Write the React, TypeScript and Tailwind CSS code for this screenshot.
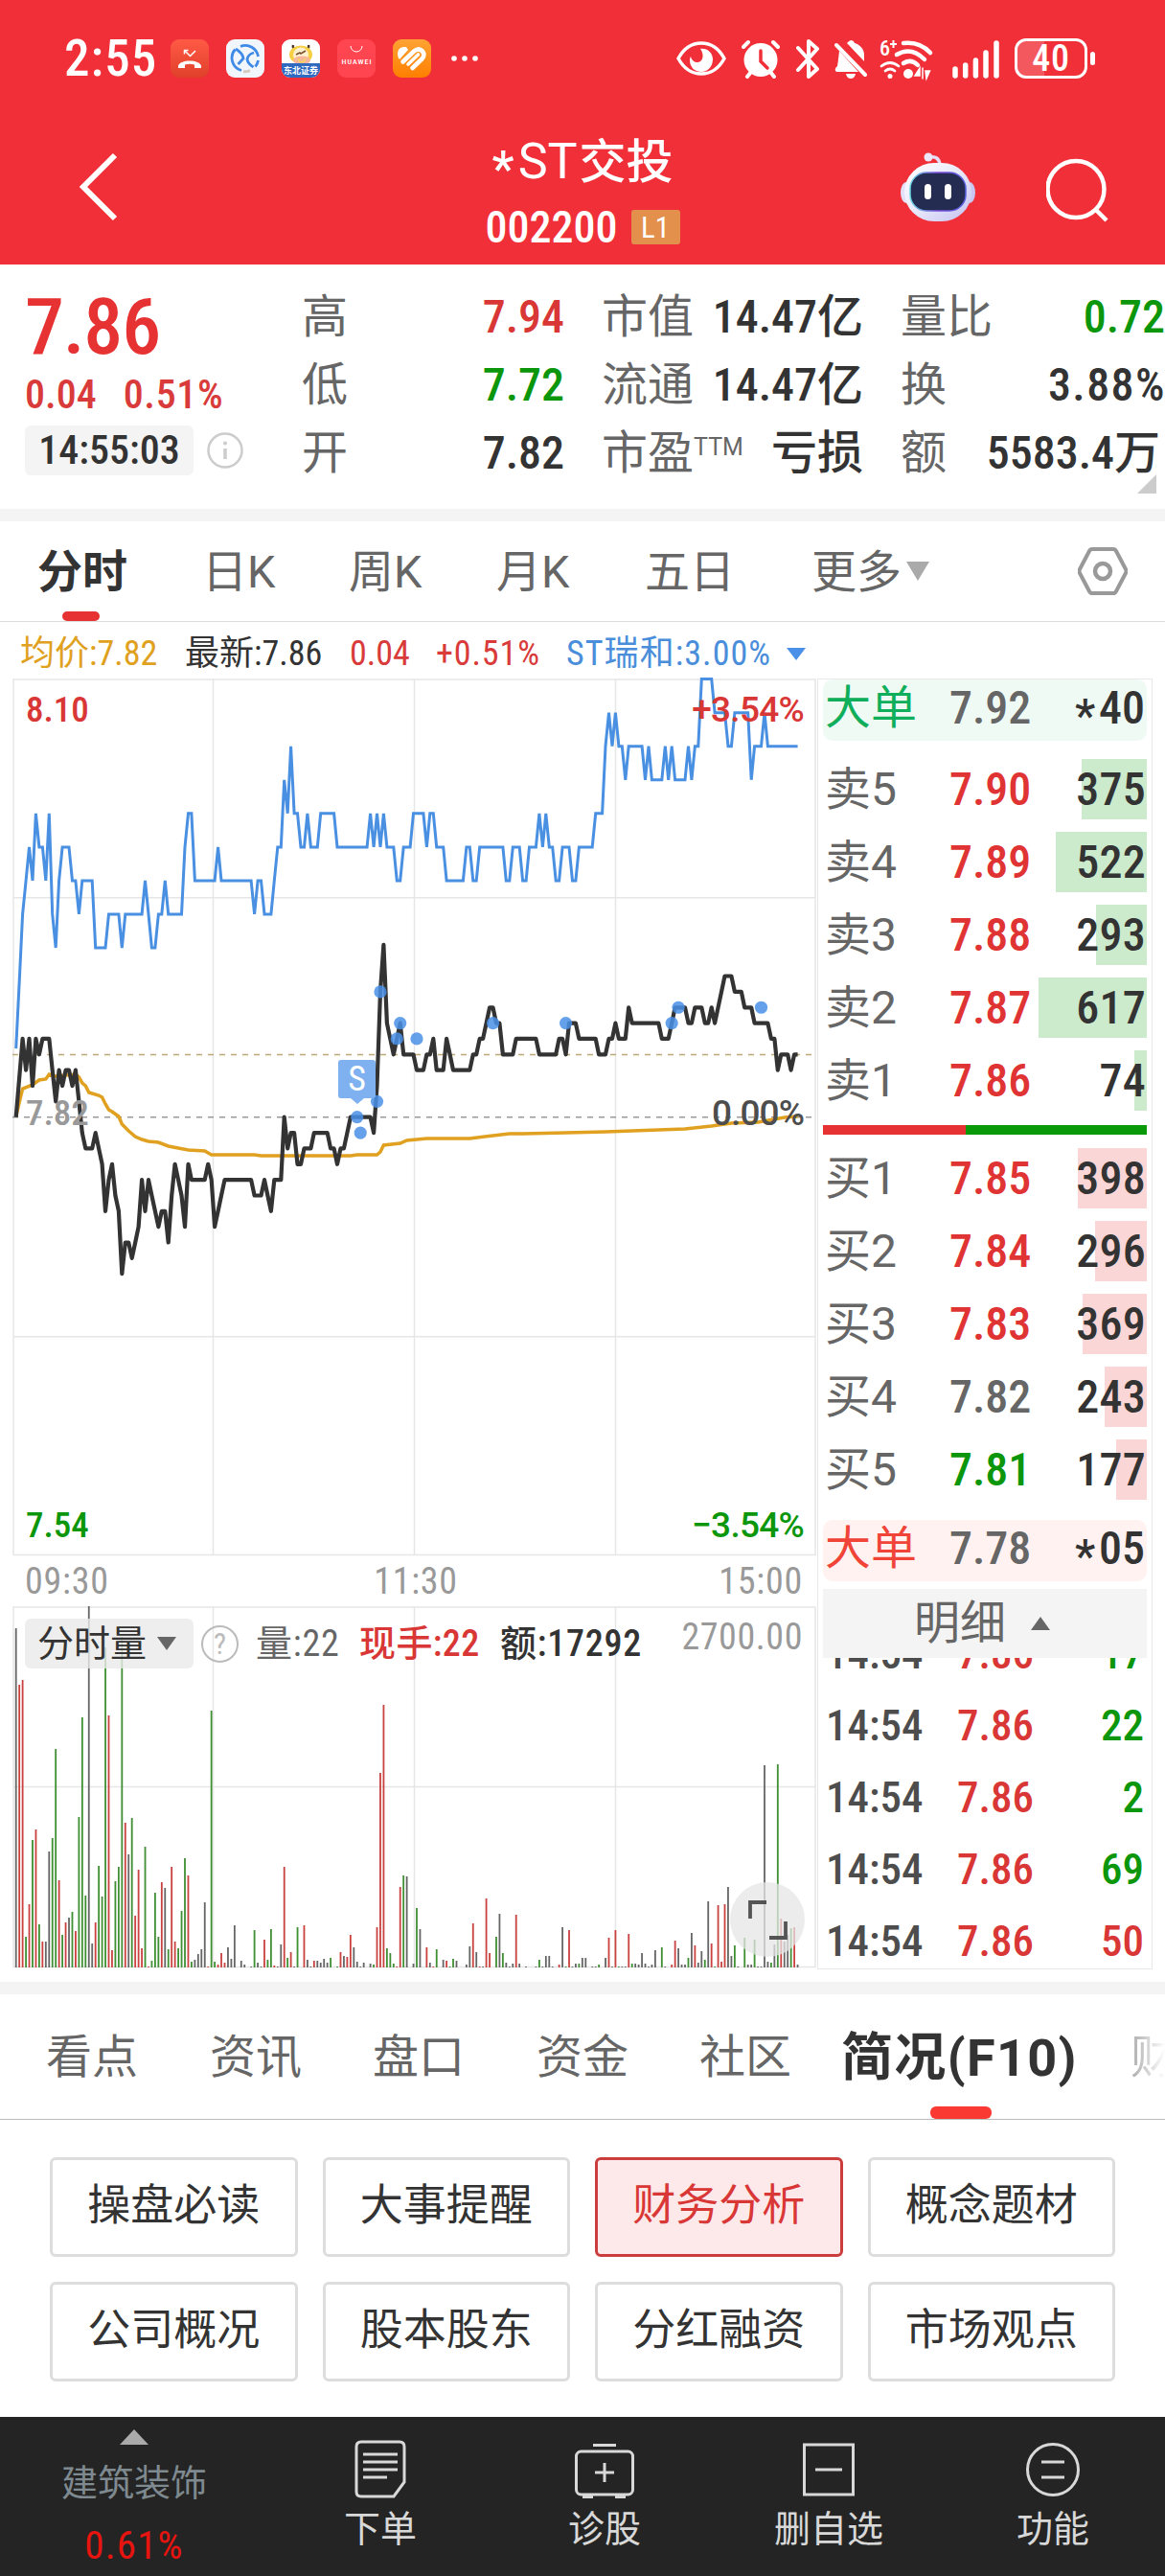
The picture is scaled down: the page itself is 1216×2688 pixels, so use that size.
import type { ReactNode } from 'react';
import clsx from 'clsx';

/* ---------- data ---------- */

// [minute of the session, ticks from yesterday's close]
const price: [number, number][] = [
  [0, 0], [2, 5], [3, 3], [4, 5], [5, 2], [6, 5], [7, 4], [8, 5], [10, 5], [11, 3], [12, 1], [13, 3], [14, 2], [15, 3],
  [16, 3], [17, 2], [18, 3], [19, 1], [20, -1], [21, -2], [23, -2], [24, -1], [25, -2], [26, -3], [27, -6], [28, -4],
  [29, -3], [30, -5], [31, -6], [32, -10], [33, -8], [34, -8], [35, -9], [36, -8], [37, -7], [38, -4], [39, -6], [40, -4],
  [41, -5], [42, -6], [43, -7], [44, -6], [45, -6], [46, -8], [47, -5], [48, -3], [49, -4], [50, -5], [51, -7], [52, -3],
  [53, -4], [57, -4], [58, -3], [59, -4], [60, -7], [61, -6], [62, -5], [63, -4], [71, -4], [72, -5], [74, -5], [75, -4],
  [76, -5], [77, -6], [78, -4], [80, -4], [81, 0], [82, -2], [83, -1], [84, -1], [85, -3], [86, -3], [87, -2], [89, -2],
  [90, -1], [94, -1], [95, -2], [96, -2], [97, -3], [98, -2], [99, -2], [100, -1], [101, 0], [107, 0], [108, -1],
  [109, 2], [110, 8], [111, 11], [112, 6], [113, 5], [114, 4], [115, 5], [116, 6], [117, 4], [120, 4], [121, 3], [123, 3],
  [124, 4], [125, 4], [126, 5], [127, 3], [129, 3], [130, 5], [131, 4], [132, 3], [137, 3], [138, 4], [139, 4], [140, 5],
  [141, 5], [142, 6], [143, 7], [144, 7], [145, 6], [146, 6], [147, 4], [150, 4], [151, 5], [157, 5], [158, 4], [163, 4],
  [164, 5], [165, 5], [166, 4], [167, 6], [169, 6], [170, 5], [175, 5], [176, 4], [178, 4], [179, 5], [180, 5], [181, 6],
  [182, 5], [184, 5], [185, 7], [186, 6], [194, 6], [195, 5], [197, 5], [198, 6], [199, 7], [202, 7], [203, 6], [204, 6],
  [205, 7], [207, 7], [208, 6], [209, 6], [210, 7], [211, 6], [214, 9], [216, 9], [217, 8], [219, 8], [220, 7], [222, 7],
  [223, 6], [227, 6], [228, 5], [229, 5], [230, 3], [231, 4], [233, 4], [234, 3], [235, 4], [236, 4],
];

const rival: [number, number][] = [
  [0, -3], [1, -1], [2, 1], [3, 2], [4, 3], [5, 2], [6, 4], [7, 3], [8, 3], [9, 2], [10, 4], [11, 1], [12, 0], [13, 2],
  [14, 3], [16, 3], [17, 2], [18, 2], [19, 1], [20, 2], [23, 2], [24, 0], [27, 0], [28, 1], [31, 1], [32, 0], [33, 1],
  [38, 1], [39, 2], [40, 1], [41, 0], [42, 0], [43, 1], [44, 1], [45, 2], [46, 1], [50, 1], [51, 3], [52, 4], [53, 4],
  [54, 2], [60, 2], [61, 3], [62, 2], [71, 2], [72, 1], [73, 2], [74, 2], [75, 1], [77, 1], [78, 2], [79, 3], [80, 3],
  [81, 5], [82, 4], [83, 6], [84, 4], [85, 4], [86, 3], [87, 3], [88, 4], [89, 3], [91, 3], [92, 4], [96, 4], [97, 3],
  [106, 3], [107, 4], [108, 3], [109, 4], [110, 3], [111, 4], [112, 3], [114, 3], [115, 2], [116, 2], [117, 3], [119, 3],
  [120, 4], [123, 4], [124, 3], [125, 4], [126, 4], [127, 3], [129, 3], [130, 2], [135, 2], [136, 3], [137, 3], [138, 2],
  [139, 2], [140, 3], [147, 3], [148, 2], [149, 2], [150, 3], [152, 3], [153, 2], [154, 2], [155, 3], [157, 3], [158, 4],
  [159, 3], [160, 4], [161, 3], [162, 3], [163, 2], [164, 2], [165, 3], [167, 3], [168, 2], [169, 2], [170, 3], [174, 3],
  [175, 4], [177, 4], [178, 6], [179, 7], [180, 6], [181, 7], [182, 6], [183, 6], [184, 5], [185, 6], [189, 6], [190, 5],
  [191, 6], [192, 5], [195, 5], [196, 6], [197, 5], [198, 6], [199, 5], [202, 5], [203, 6], [204, 5], [205, 6], [206, 6],
  [207, 8], [210, 8], [211, 7], [214, 7], [215, 6], [216, 6], [217, 7], [221, 7], [222, 5], [223, 6], [225, 6], [226, 7],
  [227, 6], [236, 6],
];

// [minute, y] on the chart canvas
const average: [number, number][] = [
  [0, 457], [1, 442], [2, 428], [5, 424], [7, 419], [9, 418], [10, 413], [12, 415], [18, 413], [19, 416], [20, 422],
  [21, 425], [22, 432], [25, 435], [26, 437], [27, 444], [28, 450], [29, 452], [31, 457], [32, 465], [34, 472], [36, 478],
  [38, 481], [40, 483], [43, 484], [46, 488], [52, 492], [57, 493], [59, 497], [72, 497], [74, 498], [101, 498],
  [103, 497], [109, 497], [110, 494], [111, 487], [116, 485], [118, 482], [124, 480], [137, 480], [144, 477], [149, 475],
  [153, 475], [166, 474], [178, 473], [186, 472], [194, 471], [202, 470], [210, 467], [216, 464], [224, 463], [232, 458],
  [236, 457],
];

const orders: [number, number][] = [
  [103, 0], [104, -1], [109, 1], [110, 8], [115, 5], [116, 6], [121, 5], [144, 6], [166, 6], [198, 6], [200, 7], [225, 7],
];

// one entry per minute: k = flat, r = up, g = down, then the bar height
const volume =
  'k354 r295 r300 g32 r66 g133 r144 g45 r27 k27 k121 g135 g228 r91 g34 r47 k52 g58 r38 g157 g261 g75 k377 k25 r47 g106 g74 ' +
  'g334 r263 r18 g90 g105 g345 r151 k118 g156 r54 r102 r20 g126 r1 g7 g78 g32 r89 k83 g19 r105 r27 g20 g59 g114 r96 g6 k8 ' +
  'k14 k19 k68 r1 g268 g6 r3 r15 r5 k21 k9 k44 k0 k7 k3 k0 k1 g39 k5 k1 r29 g8 g40 r2 k1 k24 r105 g10 r16 k1 g42 k0 r44 k8 k1 ' +
  'r7 k7 k5 k9 k5 g10 k0 g1 r16 k12 r11 r34 k21 k6 k1 k5 k0 k4 g3 r42 r203 r274 g20 g15 g4 r1 r84 g96 k95 k0 k4 g62 k40 k0 ' +
  'r21 k5 r1 g19 k0 k8 r7 g1 g9 k7 k0 k0 k3 k22 r46 k16 r1 k1 r72 r15 k0 g32 k56 g15 k5 k1 k4 r55 k4 k0 k1 k0 k0 k1 g8 k1 k12 ' +
  'k12 k1 k0 r3 k42 g1 r39 k1 k4 g4 k10 k10 k0 k1 k1 g3 k0 k10 r31 k1 r39 g1 k1 k1 r35 g4 k4 k3 k15 k4 k1 k3 k18 k0 g21 k1 k0 ' +
  'r3 r28 k20 k3 k3 g10 k36 r23 k5 k17 g8 k69 r25 g1 r65 r6 r66 k84 k12 g23 k1 k0 g31 k3 k3 g29 k1 k1 k211 k6 g5 k24 g212 r51 ' +
  'k27 k34 g41 r42 k3';

const barColors: Record<string, string> = { k: '#666666', r: '#c9423f', g: '#3f8f33' };

const sells = [
  { label: '卖5', price: '7.90', qty: '375', bar: 68 },
  { label: '卖4', price: '7.89', qty: '522', bar: 95 },
  { label: '卖3', price: '7.88', qty: '293', bar: 53 },
  { label: '卖2', price: '7.87', qty: '617', bar: 113 },
  { label: '卖1', price: '7.86', qty: '74', bar: 13 },
];

const buys = [
  { label: '买1', price: '7.85', qty: '398', bar: 72, color: 'text-[#e03434]' },
  { label: '买2', price: '7.84', qty: '296', bar: 54, color: 'text-[#e03434]' },
  { label: '买3', price: '7.83', qty: '369', bar: 67, color: 'text-[#e03434]' },
  { label: '买4', price: '7.82', qty: '243', bar: 44, color: 'text-[#666]' },
  { label: '买5', price: '7.81', qty: '177', bar: 32, color: 'text-[#0b960b]' },
];

const ticks = [
  { qty: '17', color: 'text-[#0b960b]' },
  { qty: '22', color: 'text-[#0b960b]' },
  { qty: '2', color: 'text-[#0b960b]' },
  { qty: '69', color: 'text-[#0b960b]' },
  { qty: '50', color: 'text-[#d93636]' },
];

const topics = ['操盘必读', '大事提醒', '财务分析', '概念题材', '公司概况', '股本股东', '分红融资', '市场观点'];

/* ---------- status bar ---------- */

function AppIcons() {
  return (
    <div className="flex items-center gap-[18px]">
      <svg width="40" height="40" viewBox="0 0 40 40">
        <defs>
          <linearGradient id="call" x1="0" y1="0" x2="0" y2="1">
            <stop offset="0" stopColor="#ff5a45" />
            <stop offset="1" stopColor="#e0402a" />
          </linearGradient>
        </defs>
        <rect width="40" height="40" rx="9" fill="url(#call)" />
        <path d="M14.500 15.500v-4h4M15 12l5.500 5.500 5.500-5.500" fill="none" stroke="#fff" strokeWidth="1.500" />
        <path d="M8 30v-2.500c1-3 6-5 12-5s11 2 12 5V30h-7v-3.500c-3-1-7-1-10 0V30z" fill="#fff" />
      </svg>
      <svg width="40" height="40" viewBox="0 0 40 40">
        <rect width="40" height="40" rx="9" fill="#f1f6fd" />
        <g fill="none" stroke="#3f8ae6" strokeWidth="2.800">
          <path d="M15 7.500a13.500 13.500 0 0 1 18.500 10.500M33.500 22a13.500 13.500 0 0 1-3 6.500M9.500 10.500a13.500 13.500 0 0 0 6.500 22" />
          <path d="M10 10c5 3 7.500 6 8 10L12.500 26M29 14c-4 1-6.500 3.500-7 7 .5 3 2.500 5.500 6.500 8" />
        </g>
        <path d="M18 33.500q3 .5 7-.8" fill="none" stroke="#d8c9c0" strokeWidth="3" />
      </svg>
      <svg width="40" height="40" viewBox="0 0 40 40">
        <rect width="40" height="40" rx="9" fill="#fff" />
        <path d="M12 6q-1 4 3 4M28 6q1 4-3 4" stroke="#4a3626" strokeWidth="2.500" fill="none" />
        <ellipse cx="20" cy="16" rx="12" ry="9.500" fill="#f6cf45" />
        <ellipse cx="20" cy="16" rx="8" ry="7.500" fill="#fdf0cf" />
        <path d="M15 16l4-2 1 1 5-3" stroke="#7a5230" strokeWidth="1.500" fill="none" />
        <ellipse cx="21" cy="22" rx="9" ry="4.500" fill="#f7b79b" />
        <path d="M18 20v2q3 4 6 0v-2" stroke="#f0e040" strokeWidth="1.200" fill="none" />
        <path d="M0 25h40v6a9 9 0 0 1-9 9H9a9 9 0 0 1-9-9z" fill="#2f69c0" />
        <text x="20" y="36" fontSize="9" textAnchor="middle" fill="#fff" fontWeight="700">东北证券</text>
      </svg>
      <svg width="40" height="40" viewBox="0 0 40 40">
        <rect width="40" height="40" rx="9" fill="#ff4550" />
        <path d="M14 7a6 6 0 0 0 12 0" fill="none" stroke="#fff" strokeWidth="1" />
        <text x="20" y="25.500" fontSize="8" textAnchor="middle" textLength="31" fill="#fff" fontWeight="500">HUAWEI</text>
      </svg>
      <svg width="40" height="40" viewBox="0 0 40 40">
        <defs>
          <linearGradient id="fin" x1="0" y1="0" x2="0" y2="1">
            <stop offset="0" stopColor="#ffa334" />
            <stop offset="1" stopColor="#ff7f00" />
          </linearGradient>
        </defs>
        <rect width="40" height="40" rx="9" fill="url(#fin)" />
        <path d="M5 15q0-6 6-7h3l2 3-9 10q-2-2-2-6z" fill="#fff" />
        <g fill="none" stroke="#fff" strokeLinecap="round" strokeWidth="4.600">
          <path d="M10.500 23.500L22 12.500Q27 8.500 31 12.500q3 4-.5 8L20.500 30" />
          <path d="M16 26L26.500 16" strokeWidth="3.600" />
        </g>
      </svg>
      <svg width="40" height="40" viewBox="0 0 40 40" fill="#fff">
        <circle cx="6" cy="20" r="2.800" />
        <circle cx="17" cy="20" r="2.800" />
        <circle cx="28" cy="20" r="2.800" />
      </svg>
    </div>
  );
}

function StatusIcons() {
  return (
    <div className="flex items-center">
      {/* eye comfort */}
      <svg width="52" height="40" viewBox="0 0 52 40" className="mr-4">
        <path d="M2 20C8 9 17 4 26 4s18 5 24 16C44 31 35 36 26 36S8 31 2 20z" fill="none" stroke="#fff" strokeWidth="3.500" />
        <path d="M25 10c7-1 13 4 13 11 0 7-5 13-12 13s-12-5-12-12c0-2 .5-3 1-4 1 4 4 6 7 6 5 0 8-7 3-14z" fill="#fff" />
      </svg>
      {/* alarm */}
      <svg width="40" height="41" viewBox="0 0 40 41" className="mr-[17px]">
        <circle cx="20" cy="21.500" r="17.500" fill="#fff" />
        <path d="M2 8l5-5M38 8l-5-5M6 39l4-5M34 39l-4-5" stroke="#fff" strokeWidth="4" strokeLinecap="round" />
        <path d="M20 12v11l7 7" fill="none" stroke="#f12f38" strokeWidth="3.500" strokeLinecap="round" />
      </svg>
      {/* bluetooth */}
      <svg width="24" height="41" viewBox="0 0 24 41" className="mr-4">
        <path d="M2 9l20 22-9 8V2l9 8L2 32" fill="none" stroke="#fff" strokeWidth="4" strokeLinejoin="round" strokeLinecap="round" />
      </svg>
      {/* muted bell */}
      <svg width="34" height="41" viewBox="0 0 34 41" className="mr-[13px]">
        <path d="M17 1c-2 1-3 2-4 3l18 19V16c0-6-5-11-10-12q-1-3-4-3zM5 12L25 34H2q-3-3 1-6 1-6 2-16z" fill="#fff" />
        <path d="M2 6l30 31" stroke="#fff" strokeWidth="4" strokeLinecap="round" />
        <path d="M12 36h10q-1 5-5 5t-5-5z" fill="#fff" />
      </svg>
      {/* wifi 6+ */}
      <svg width="55" height="41" viewBox="0 0 55 41" className="mr-[21px] overflow-visible" fill="none" stroke="#fff" strokeLinecap="round">
        <text x="0" y="17" fontSize="22" fontWeight="500" fill="#fff" stroke="none">6</text>
        <path d="M14.500 1v8M11 5h7" strokeWidth="2" strokeLinecap="butt" />
        <path d="M25 4q17-2 28 10" strokeWidth="4.500" />
        <path d="M18 16q15-9 29 5" strokeWidth="4.500" />
        <path d="M25 25q8-5 15 2" strokeWidth="4.500" />
        <circle cx="30" cy="36" r="5" fill="#fff" stroke="none" />
        <path d="M2 28q9-7 18 0M6 33q5-4 10 0" strokeWidth="2.800" />
        <circle cx="11" cy="38.500" r="2.500" fill="#fff" stroke="none" />
        <path d="M37 38l5-8v8zM45 30v11M48 33h4.500L49 41z" fill="#fff" strokeWidth="1.500" />
      </svg>
      {/* signal */}
      <svg width="49" height="41" viewBox="0 0 49 41" className="mr-4" stroke="#fff" strokeWidth="5.500" strokeLinecap="round">
        <path d="M3 38V31M13.700 38V27M24.400 38V22M35 38V14M46 38V4" />
      </svg>
      {/* battery */}
      <div className="relative flex h-[42px] w-[76px] items-center justify-center rounded-[12px] border-[3px] border-white">
        <div className="absolute inset-y-0 left-0 w-[28px] rounded-l-[9px] bg-white/20" />
        <span className="relative text-[38px] font-medium leading-none tracking-[0.02em] text-white">40</span>
      </div>
      <div className="ml-[3px] h-[14px] w-[5px] rounded-full bg-white" />
    </div>
  );
}

function Robot() {
  return (
    <svg width="78" height="72" viewBox="0 0 78 72">
      <defs>
        <linearGradient id="shell" x1="0" y1="0" x2="1" y2="1">
          <stop offset="0" stopColor="#ffffff" />
          <stop offset="0.500" stopColor="#e9e8fa" />
          <stop offset="1" stopColor="#c3c0f0" />
        </linearGradient>
        <linearGradient id="rim" x1="0" y1="0" x2="1" y2="0">
          <stop offset="0" stopColor="#69d6e0" />
          <stop offset="0.500" stopColor="#7d4fe0" />
          <stop offset="1" stopColor="#5560dd" />
        </linearGradient>
      </defs>
      <path d="M30 5q10-2 11 8" fill="none" stroke="#e4ddf5" strokeWidth="3.500" />
      <circle cx="29" cy="5" r="4.500" fill="#ece6f8" />
      <ellipse cx="6" cy="42" rx="6" ry="11" fill="#e3e0f7" />
      <ellipse cx="72" cy="42" rx="6" ry="11" fill="#c9c6f2" />
      <rect x="4" y="11" width="70" height="61" rx="31" fill="url(#shell)" />
      <rect x="10" y="21" width="58" height="40" rx="17" fill="#242c52" stroke="url(#rim)" strokeWidth="1.500" />
      <rect x="25" y="33" width="7" height="16" rx="3.500" fill="#fff" />
      <rect x="46" y="33" width="7" height="16" rx="3.500" fill="#fff" />
    </svg>
  );
}

function Header() {
  return (
    <header className="bg-[#f12f38] text-white">
      <div className="flex h-[122px] items-center justify-between pl-[67px] pr-[73px]">
        <div className="flex items-center gap-[17px]">
          <span className="w-[94px] whitespace-nowrap text-[53px] font-medium leading-none tracking-[0.02em]">2:55</span>
          <AppIcons />
        </div>
        <StatusIcons />
      </div>
      <div className="grid h-[154px] grid-cols-[1fr_auto_1fr]">
        <svg width="42" height="72" viewBox="0 0 42 72" className="ml-[82px] mt-[37px]">
          <path d="M38 3L5 36l33 33" fill="none" stroke="#fff" strokeWidth="6" />
        </svg>
        <div className="flex flex-col items-center pt-[19px]">
          <h1 className="flex h-[56px] items-center text-[52px] font-medium leading-none">
            <Star />
            <span className="mr-[2px] font-normal font-stretch-[100%]">ST</span>
            <span className="text-[49px]">交投</span>
          </h1>
          <div className="mt-[12px] flex h-[56px] items-center gap-[14px]">
            <span className="text-[46px] font-medium leading-none">002200</span>
            <span className="flex h-[36px] w-[51px] items-center justify-center rounded-[3px] bg-[#e2904c] text-[31px] leading-none">L1</span>
          </div>
        </div>
        <div className="flex justify-end gap-[74px] pr-[58px] pt-[37px]">
          <Robot />
          <svg width="66" height="72" viewBox="0 0 66 72" className="mt-1" fill="none" stroke="#fff" strokeWidth="4.500">
            <circle cx="31" cy="34.500" r="29.500" />
            <path d="M52 56l11 11" />
          </svg>
        </div>
      </div>
    </header>
  );
}

// asterisk dropped to the middle of the digits
function Star() {
  return <span className="relative top-[0.160em] mr-[0.080em] inline-block">*</span>;
}

/* ---------- quote ---------- */

function Cell({ label, children, color = 'text-[#333]' }: { label: ReactNode; children: ReactNode; color?: string }) {
  return (
    <div className="flex h-[71px] items-center justify-between whitespace-nowrap">
      <span className="text-[#666]">{label}</span>
      <span className={clsx('font-medium', color)}>{children}</span>
    </div>
  );
}

function Quote() {
  return (
    <section className="relative flex h-[255px] text-[48px] leading-none">
      <div className="w-[315px] pl-[26px] pt-[25px]">
        <p className="text-[82px] font-medium leading-[80px] tracking-[-0.015em] text-[#e63232]">7.86</p>
        <p className="flex h-[62px] items-center gap-[28px] text-[42px] font-medium text-[#d93a3a]">
          <span>0.04</span>
          <span className="tracking-[0.015em]">0.51%</span>
        </p>
        <div className="flex items-center gap-[14px] pt-px">
          <span className="flex h-[52px] w-[176px] items-center justify-center rounded-[6px] bg-[#f4f4f4] pb-px text-[42px] font-medium text-[#333]">
            14:55:03
          </span>
          <svg width="38" height="38" viewBox="0 0 38 38" fill="none" stroke="#ccc">
            <circle cx="19" cy="19" r="17.500" strokeWidth="2.500" />
            <path d="M19 17v11" strokeWidth="3.500" />
            <circle cx="19" cy="11.500" r="1" strokeWidth="2" />
          </svg>
        </div>
      </div>
      <div className="mr-[39px] w-[274px] pt-[19px]">
        <Cell label="高" color="text-[#d93636]">7.94</Cell>
        <Cell label="低" color="text-[#0b960b]">7.72</Cell>
        <Cell label="开">7.82</Cell>
      </div>
      <div className="mr-[39px] w-[273px] pt-[19px]">
        <Cell label="市值">14.47亿</Cell>
        <Cell label="流通">14.47亿</Cell>
        <Cell label={<>市盈<sup className="relative -top-[14px] align-baseline text-[25px] font-stretch-[100%]">TTM</sup></>}>亏损</Cell>
      </div>
      <div className="flex-1 pt-[19px]">
        <Cell label="量比" color="text-[#0b960b]">0.72</Cell>
        <Cell label="换"><span className="-mr-px tracking-[0.030em]">3.88%</span></Cell>
        <Cell label="额"><span className="mr-[5px]">5583.4万</span></Cell>
      </div>
      <svg width="20" height="20" viewBox="0 0 20 20" className="absolute bottom-4 right-[9px]">
        <path d="M20 0v20H0z" fill="#ccc" />
      </svg>
    </section>
  );
}

function PeriodTabs() {
  return (
    <nav className="flex h-[105px] items-center border-b border-[#ddd] pl-[39px] pr-[39px] text-[47px] leading-none text-[#666] font-stretch-[100%]">
      <div className="relative flex h-full w-[172px] items-center font-bold text-[#333]">
        分时
        <span className="absolute bottom-0 left-[26px] h-[10px] w-[39px] rounded-full bg-[#e63232]" />
      </div>
      <span className="w-[153px]">日K</span>
      <span className="w-[154px]">周K</span>
      <span className="w-[155px]">月K</span>
      <span className="w-[174px]">五日</span>
      <span>更多</span>
      <svg width="24" height="20" viewBox="0 0 24 20" className="ml-[5px]">
        <path d="M0 0h24L12 20z" fill="#aaa" />
      </svg>
      <svg width="52" height="50" viewBox="0 0 52 50" className="ml-auto" fill="none" stroke="#999" strokeLinejoin="round">
        <path d="M15 2h22q2 0 3 2l10 19q1 2 0 4L40 46q-1 2-3 2H15q-2 0-3-2L2 27q-1-2 0-4L12 4q1-2 3-2z" strokeWidth="4" />
        <circle cx="26" cy="25" r="8" strokeWidth="4.500" />
      </svg>
    </nav>
  );
}

/* ---------- charts ---------- */

const minuteX = (m: number) => 3.7 + m * 3.457;
const toPoints = (list: [number, number][], y: (v: number) => number) =>
  list.map(([m, v]) => `${minuteX(m).toFixed(1)},${y(v).toFixed(1)}`).join(' ');
const priceY = (v: number) => 457.7 - v * 16.35;
const rivalY = (v: number) => 281 - v * 35.05;

function Legend() {
  return (
    <div className="flex h-[59px] items-center whitespace-nowrap pl-[21px] pt-[7px] text-[36px] leading-none">
      <span className="w-[172px] text-[#e0a020]">均价:7.82</span>
      <span className="w-[172px] text-[#333]">最新:7.86</span>
      <span className="w-[90px] text-[#d93a3a]">0.04</span>
      <span className="w-[136px] tracking-[0.025em] text-[#d93a3a]">+0.51%</span>
      <span className="w-[230px] tracking-[0.030em] text-[#4a8edb]">ST瑞和:3.00%</span>
      <svg width="20" height="13" viewBox="0 0 20 13">
        <path d="M0 0h20L10 13z" fill="#4a90e8" />
      </svg>
    </div>
  );
}

function PriceChart() {
  return (
    <div className="relative ml-[13px] h-[915px] w-[840px] text-[37px] font-medium leading-none">
      <svg width="840" height="915" viewBox="0 0 840 915" className="block overflow-visible" fill="none">
        <g stroke="#e6e6e6" strokeWidth="1.500">
          <path d="M1 1H838V914.500H1zM1 228.700H838M1 686.700H838M209.500 1V914M419.500 1V914M629.500 1V914" />
        </g>
        <path d="M0 392.500H838" stroke="#bfa878" strokeWidth="1.500" strokeDasharray="6 6" />
        <path d="M0 457.700H838" stroke="#999" strokeWidth="1.500" strokeDasharray="6 6" />
        <polyline points={toPoints(rival, rivalY)} stroke="#4a90e2" strokeWidth="3" />
        <polyline points={toPoints(average, (v) => v)} stroke="#e0a020" strokeWidth="3.500" />
        <polyline points={toPoints(price, priceY)} stroke="#333" strokeWidth="4.200" strokeLinejoin="round" />
        {orders.map(([m, v]) => (
          <circle key={m} cx={minuteX(m)} cy={priceY(v)} r="6.600" fill="#4a8fe8" fillOpacity="0.850" />
        ))}
        <path d="M343 398h33a3 3 0 0 1 3 3v34a3 3 0 0 1-3 3h-9l-7 6-7-6h-10a3 3 0 0 1-3-3v-34a3 3 0 0 1 3-3z" fill="#7fb1f1" />
        <text x="359.500" y="430" fontSize="36" fontWeight="400" textAnchor="middle" fill="#fff">S</text>
      </svg>
      <span className="absolute left-[14px] top-[14px] text-[#d93636]">8.10</span>
      <span className="absolute right-[14px] top-[14px] tracking-[-0.020em] text-[#d93636] font-stretch-[100%]">+3.54%</span>
      <span className="absolute left-[14px] top-[435px] text-[#999]">7.82</span>
      <span className="absolute right-[14px] top-[435px] tracking-[-0.025em] text-[#4d4d4d] font-stretch-[100%]">0.00%</span>
      <span className="absolute bottom-[13px] left-[14px] text-[#0b960b]">7.54</span>
      <span className="absolute bottom-[13px] right-[14px] tracking-[-0.020em] text-[#0b960b] font-stretch-[100%]">−3.54%</span>
    </div>
  );
}

function VolumeChart() {
  return (
    <div className="relative ml-[13px] h-[378px] w-[840px] text-[38px] leading-none">
      <svg width="840" height="378" viewBox="0 0 840 378" className="block">
        <path
          d="M1 1H838V376.500H1zM1 188.500H838M209.500 1V376M419.500 1V376M629.500 1V376"
          fill="none"
          stroke="#e6e6e6"
          strokeWidth="1.500"
        />
        {volume.split(' ').map((bar, m) => {
          const h = Number(bar.slice(1));
          return <rect key={m} x={minuteX(m) - 0.9} y={377 - h} width="1.800" height={h} fill={barColors[bar[0]]} />;
        })}
      </svg>
      <div className="absolute left-[13px] top-[13px] flex h-[52px] items-center whitespace-nowrap">
        <div className="flex h-full w-[176px] items-center gap-[11px] rounded-[6px] bg-[#eaeaea]/80 pl-[13px] text-[#333]">
          <span>分时量</span>
          <svg width="20" height="14" viewBox="0 0 20 14">
            <path d="M0 0h20L10 14z" fill="#666" />
          </svg>
        </div>
        <span className="ml-[8px] flex size-[39px] items-center justify-center rounded-full border-2 border-[#bbb] text-[31px] text-[#bbb]">?</span>
        <span className="ml-[18px] w-[108px] tracking-[0.020em] text-[#666]">量:22</span>
        <span className="w-[147px] font-medium tracking-[0.010em] text-[#d93636]">现手:22</span>
        <span className="font-medium tracking-[0.020em] text-[#333]">额:17292</span>
      </div>
      <span className="absolute right-[15px] top-[13px] tracking-[0.015em] text-[#999]">2700.00</span>
      <svg width="78" height="78" viewBox="0 0 78 78" className="absolute bottom-[12px] right-[13px]">
        <circle cx="39" cy="39" r="39" fill="#e6e6e6" fillOpacity="0.750" />
        <path d="M21 38V21h17M58 41v17H41" fill="none" stroke="#555" strokeWidth="3.800" />
      </svg>
    </div>
  );
}

/* ---------- order book ---------- */

type Level = { label: string; price: string; qty: string; bar: number; color?: string };

function BookRow({ level, side }: { level: Level; side: 'sell' | 'buy' }) {
  return (
    <div className="relative flex h-[63px] items-center">
      <div
        className={clsx('absolute inset-y-0 right-0', side === 'sell' ? 'bg-[#cceacc]' : 'bg-[#fad6d6]')}
        style={{ width: level.bar }}
      />
      <span className="relative w-[132px] pl-[2px] text-[#666] font-stretch-[100%]">{level.label}</span>
      <span className={clsx('relative font-medium', level.color ?? 'text-[#e03434]')}>{level.price}</span>
      <span className="relative ml-auto pr-px font-medium tracking-[0.005em] text-[#333]">{level.qty}</span>
    </div>
  );
}

function BigOrder({ price, qty, side }: { price: string; qty: string; side: 'sell' | 'buy' }) {
  return (
    <div
      className={clsx(
        'flex h-[64px] shrink-0 items-center rounded-[10px] pb-[4px]',
        side === 'sell' ? 'bg-[#f0faf5] text-[#0fae5a]' : 'bg-[#fff2f0] text-[#f04438]',
      )}
    >
      <span className="w-[132px] pl-[2px]">大单</span>
      <span className="font-medium text-[#666]">{price}</span>
      <span className="ml-auto pr-[2px] font-medium text-[#333]">
        <Star />
        {qty}
      </span>
    </div>
  );
}

function OrderBook() {
  return (
    <aside className="mt-[59px] flex h-[1347px] w-[350px] flex-col overflow-hidden border border-[#e8e8e8] px-[5px] text-[48px] leading-none">
      <BigOrder side="sell" price="7.92" qty="40" />
      <div className="mt-[19px] flex shrink-0 flex-col gap-[13px]">
        {sells.map((level) => (
          <BookRow key={level.label} level={level} side="sell" />
        ))}
      </div>
      <div className="mt-[15px] flex h-[10px] shrink-0">
        <div className="w-[149px] bg-[#e63232]" />
        <div className="flex-1 bg-[#099909]" />
      </div>
      <div className="mt-[14px] mb-[21px] flex shrink-0 flex-col gap-[13px]">
        {buys.map((level) => (
          <BookRow key={level.label} level={level} side="buy" />
        ))}
      </div>
      <BigOrder side="buy" price="7.78" qty="05" />
      <div className="z-10 mt-[8px] flex h-[72px] shrink-0 items-center justify-center gap-[26px] bg-[#f4f4f4] pr-[6px] text-[#666]">
        <span>明细</span>
        <svg width="20" height="14" viewBox="0 0 20 14">
          <path d="M0 14h20L10 0z" fill="#666" />
        </svg>
      </div>
      <div className="-mt-[42px] shrink-0 text-[45px] font-medium">
        {ticks.map((tick) => (
          <div key={tick.qty} className="flex h-[75px] items-center">
            <span className="w-[140px] pl-[3px] text-[#4d4d4d]">14:54</span>
            <span className="text-[#d93636]">7.86</span>
            <span className={clsx('ml-auto pr-[3px]', tick.color)}>{tick.qty}</span>
          </div>
        ))}
      </div>
    </aside>
  );
}

/* ---------- F10 ---------- */

function SectionTabs() {
  return (
    <nav className="flex h-[131px] items-center overflow-hidden whitespace-nowrap border-b border-[#bbb] pl-[48px] text-[48px] leading-none text-[#666]">
      <span className="w-[171px] shrink-0 pt-[2px]">看点</span>
      <span className="w-[170px] shrink-0 pt-[2px]">资讯</span>
      <span className="w-[171px] shrink-0 pt-[2px]">盘口</span>
      <span className="w-[170px] shrink-0 pt-[2px]">资金</span>
      <span className="w-[148px] shrink-0 pt-[2px]">社区</span>
      <div className="relative flex h-full w-[302px] shrink-0 items-center text-[54px] font-bold tracking-[0.025em] text-[#333] font-stretch-[100%]">
        <span className="pt-[3px]">简况(F10)</span>
        <span className="absolute bottom-0 left-[93px] h-[13px] w-[64px] rounded-[6px] bg-[#fa3a32]" />
      </div>
      <span className="shrink-0 bg-linear-to-r from-[#aaa] to-white to-[36px] bg-clip-text pt-[2px] text-transparent">财</span>
    </nav>
  );
}

function Topics() {
  return (
    <section className="grid h-[310px] grid-cols-4 content-start gap-[26px] px-[52px] pt-[39px] text-[45px] leading-none">
      {topics.map((topic) => (
        <button
          key={topic}
          className={clsx(
            'flex h-[104px] items-center justify-center rounded-[6px] border-3 pb-[3px]',
            topic === '财务分析' ? 'border-[#cb3d3d] bg-[#fde9e9] text-[#d93636]' : 'border-[#ddd] text-[#333]',
          )}
        >
          {topic}
        </button>
      ))}
    </section>
  );
}

function NavItem({ label, children }: { label: string; children: ReactNode }) {
  return (
    <div className="flex w-[234px] flex-col items-center pt-[23px] text-[#d8d8d8]">
      <svg width="64" height="64" viewBox="0 0 64 64" fill="none" stroke="#d8d8d8" strokeWidth="3">
        {children}
      </svg>
      <span className="mt-[11px] text-[38px] leading-none">{label}</span>
    </div>
  );
}

function BottomNav() {
  return (
    <footer className="flex h-[166px] bg-[#242424]">
      <div className="flex w-[280px] flex-col items-center pt-[13px] leading-none">
        <svg width="30" height="16" viewBox="0 0 30 16">
          <path d="M0 16h30L15 0z" fill="#aaa" />
        </svg>
        <span className="mt-[21px] text-[38px] text-[#7f8a90]">建筑装饰</span>
        <span className="mt-[26px] text-[41px] tracking-[0.030em] text-[#e8140f]">0.61%</span>
      </div>
      <NavItem label="下单">
        <path d="M12 3h40q5 0 5 5v37L46 60H12q-5 0-5-5V8q0-5 5-5zM14 16h36M14 24h36M14 32h36M14 40h25" />
      </NavItem>
      <NavItem label="诊股">
        <rect x="2.500" y="13" width="59" height="45" rx="5" />
        <path d="M20 6.500h24M32 25v20M22 35h20M9 60.500h11M43 60.500h11" />
      </NavItem>
      <NavItem label="删自选">
        <path d="M6.500 6h51v52h-51zM18 32h28" />
      </NavItem>
      <NavItem label="功能">
        <circle cx="32" cy="32" r="26.500" />
        <path d="M20 24h24M20 40h24" />
      </NavItem>
    </footer>
  );
}

export default function App() {
  return (
    <div className="w-[1216px] overflow-hidden bg-white font-[Roboto,'Noto_Sans_CJK_SC',sans-serif] font-stretch-[84%]">
      <Header />
      <Quote />
      <div className="h-[13px] bg-[#f4f4f4]" />
      <PeriodTabs />
      <main className="flex h-[1419px]">
        <div className="w-[853px]">
          <Legend />
          <PriceChart />
          <div className="grid h-[53px] grid-cols-3 items-center pl-[26px] pr-[15px] text-[38px] leading-none tracking-[0.020em] text-[#999]">
            <span>09:30</span>
            <span className="pl-1 text-center">11:30</span>
            <span className="text-right">15:00</span>
          </div>
          <VolumeChart />
        </div>
        <OrderBook />
      </main>
      <div className="h-[13px] bg-[#f4f4f4]" />
      <SectionTabs />
      <Topics />
      <BottomNav />
    </div>
  );
}
